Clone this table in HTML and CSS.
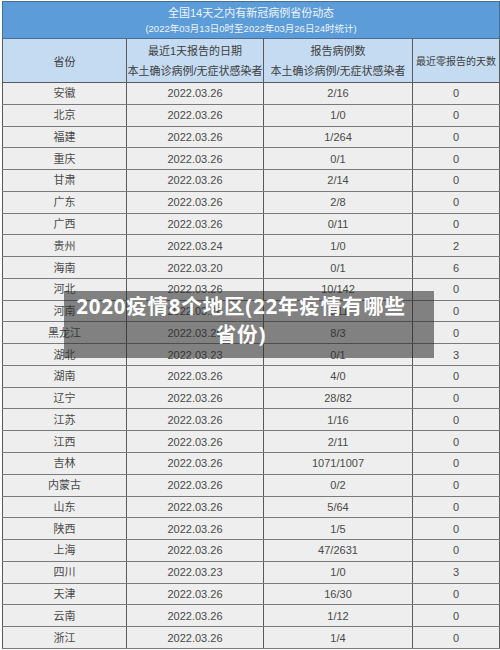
FILE: index.html
```html
<!DOCTYPE html>
<html lang="zh-CN">
<head>
<meta charset="utf-8">
<title>2020疫情8个地区</title>
<link rel="stylesheet" href="styles.css">
</head>
<body>
<div class="page">
  <table class="tbl">
    <colgroup>
      <col class="c1"><col class="c2"><col class="c3"><col class="c4">
    </colgroup>
    <thead>
      <tr class="title-row">
        <th colspan="4">
          <div class="title">全国14天之内有新冠病例省份动态</div>
          <div class="subtitle">(2022年03月13日0时至2022年03月26日24时统计)</div>
        </th>
      </tr>
      <tr class="head-row">
        <th>省份</th>
        <th><div class="hl">最近1天报告的日期</div><div class="hl">本土确诊病例/无症状感染者</div></th>
        <th><div class="hl">报告病例数</div><div class="hl">本土确诊病例/无症状感染者</div></th>
        <th class="narrow">最近零报告的天数</th>
      </tr>
    </thead>
    <tbody>
      <tr><td>安徽</td><td>2022.03.26</td><td>2/16</td><td>0</td></tr>
      <tr><td>北京</td><td>2022.03.26</td><td>1/0</td><td>0</td></tr>
      <tr><td>福建</td><td>2022.03.26</td><td>1/264</td><td>0</td></tr>
      <tr><td>重庆</td><td>2022.03.26</td><td>0/1</td><td>0</td></tr>
      <tr><td>甘肃</td><td>2022.03.26</td><td>2/14</td><td>0</td></tr>
      <tr><td>广东</td><td>2022.03.26</td><td>2/8</td><td>0</td></tr>
      <tr><td>广西</td><td>2022.03.26</td><td>0/11</td><td>0</td></tr>
      <tr><td>贵州</td><td>2022.03.24</td><td>1/0</td><td>2</td></tr>
      <tr><td>海南</td><td>2022.03.20</td><td>0/1</td><td>6</td></tr>
      <tr><td>河北</td><td>2022.03.26</td><td>10/142</td><td>0</td></tr>
      <tr><td>河南</td><td>2022.03.26</td><td>1/11</td><td>0</td></tr>
      <tr><td>黑龙江</td><td>2022.03.26</td><td>8/3</td><td>0</td></tr>
      <tr><td>湖北</td><td>2022.03.23</td><td>0/1</td><td>3</td></tr>
      <tr><td>湖南</td><td>2022.03.26</td><td>4/0</td><td>0</td></tr>
      <tr><td>辽宁</td><td>2022.03.26</td><td>28/82</td><td>0</td></tr>
      <tr><td>江苏</td><td>2022.03.26</td><td>1/16</td><td>0</td></tr>
      <tr><td>江西</td><td>2022.03.26</td><td>2/11</td><td>0</td></tr>
      <tr><td>吉林</td><td>2022.03.26</td><td>1071/1007</td><td>0</td></tr>
      <tr><td>内蒙古</td><td>2022.03.26</td><td>0/2</td><td>0</td></tr>
      <tr><td>山东</td><td>2022.03.26</td><td>5/64</td><td>0</td></tr>
      <tr><td>陕西</td><td>2022.03.26</td><td>1/5</td><td>0</td></tr>
      <tr><td>上海</td><td>2022.03.26</td><td>47/2631</td><td>0</td></tr>
      <tr><td>四川</td><td>2022.03.23</td><td>1/0</td><td>3</td></tr>
      <tr><td>天津</td><td>2022.03.26</td><td>16/30</td><td>0</td></tr>
      <tr><td>云南</td><td>2022.03.26</td><td>1/12</td><td>0</td></tr>
      <tr><td>浙江</td><td>2022.03.26</td><td>1/4</td><td>0</td></tr>
    </tbody>
  </table>
  <div class="overlay">2020疫情8个地区(22年疫情有哪些省份)</div>
</div>
</body>
</html>
```

FILE: styles.css
```css
html, body {
  margin: 0;
  padding: 0;
  background: #ffffff;
}
.page {
  position: relative;
  width: 500px;
  height: 650px;
  overflow: hidden;
  padding: 1px 0 0 2px;
  box-sizing: border-box;
}
.tbl {
  border-collapse: collapse;
  table-layout: fixed;
  width: 497px;
  font-family: "Liberation Sans", "Noto Sans CJK SC", sans-serif;
  font-size: 11px;
  color: #4a4a4a;
}
.c1 { width: 124px; }
.c2 { width: 137px; }
.c3 { width: 149px; }
.c4 { width: 87px; }
.tbl th, .tbl td {
  border: 1px solid #5a5a5a;
  text-align: center;
  padding: 0;
  font-weight: normal;
}
.title-row th {
  background: #5c9cd8;
  color: #eef4fb;
  height: 36px;
  border-color: #4a6f93;
}
.title {
  font-size: 11px;
  line-height: 14px;
}
.subtitle {
  font-size: 9.5px;
  line-height: 13px;
  margin-top: 2px;
}
.head-row th {
  background: #c4dbf1;
  color: #3e3e3e;
  height: 43px;
  font-size: 11px;
}
.head-row th.narrow {
  font-size: 10px;
  white-space: nowrap;
}
.hl {
  line-height: 20px;
}
.tbl td {
  background: #eeeeee;
  height: 20.77px;
  line-height: 14px;
}
.tbl tbody td {
  border-top-color: #7a7a7a;
  border-bottom-color: #7a7a7a;
}
.overlay {
  position: absolute;
  left: 64px;
  top: 291px;
  width: 370px;
  height: 67px;
  box-sizing: border-box;
  padding: 1px 24px 0 8px;
  background: rgba(40, 40, 40, 0.55);
  color: #ffffff;
  font-family: "Noto Sans", "Noto Sans CJK SC", sans-serif;
  font-weight: bold;
  font-size: 20.5px;
  letter-spacing: 0.8px;
  line-height: 28px;
  text-align: center;
}
```
